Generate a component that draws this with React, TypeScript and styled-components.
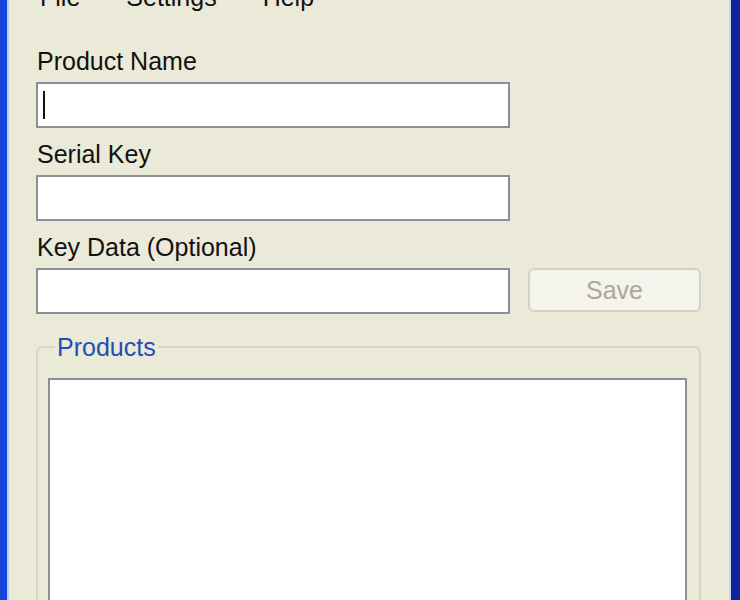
import React from "react";
import styled, { createGlobalStyle } from "styled-components";

const GlobalStyle = createGlobalStyle`
  html, body {
    margin: 0;
    padding: 0;
    overflow: hidden;
  }
  body {
    font-family: "Liberation Sans", Arial, sans-serif;
  }
`;

const Frame = styled.div`
  display: flex;
  height: 100vh;
  box-sizing: border-box;
  border-left: 7px solid #1447d9;
  border-right: 9px solid #0b249e;
  overflow: hidden;
`;

const Client = styled.div`
  flex: 1;
  display: flex;
  flex-direction: column;
  background: #ebe9d8;
  border-left: 2px solid #b9cff2;
  border-right: 2px solid #c7d6ef;
  font-size: 25px;
  color: #111;
`;

const MenuBar = styled.div`
  display: flex;
  height: 30px;
  line-height: 30px;
  margin-top: -18px;
  padding-left: 8px;
`;

const MenuItem = styled.span`
  padding: 0 23px;
`;

const Form = styled.div`
  display: grid;
  grid-template-columns: 474px 173px;
  column-gap: 18px;
  padding: 34px 0 0 27px;
`;

const Label = styled.div`
  grid-column: 1;
  height: 30px;
  line-height: 30px;
  padding-left: 1px;
  margin-bottom: 6px;
`;

const Field = styled.div`
  grid-column: 1;
  height: 46px;
  box-sizing: border-box;
  border: 2px solid #8a9096;
  background: #fff;
  margin-bottom: 11px;
  display: flex;
  align-items: center;
  padding-left: 5px;
`;

const Caret = styled.span`
  width: 2px;
  height: 28px;
  background: #111;
`;

const SaveButton = styled.button`
  grid-column: 2;
  height: 44px;
  box-sizing: border-box;
  border: 2px solid #d3d1c4;
  border-radius: 6px;
  background: #f4f3ec;
  color: #aca899;
  font-family: "Liberation Sans", Arial, sans-serif;
  font-size: 25px;
  padding: 0;
`;

const GroupBox = styled.fieldset`
  width: 665px;
  box-sizing: border-box;
  margin: 7px 0 0 27px;
  border: 2px solid #d6d4c6;
  border-radius: 7px;
  padding: 16px 12px 0 10px;
  min-width: 0;
`;

const GroupTitle = styled.legend`
  color: #1f4fb4;
  height: 30px;
  line-height: 30px;
  margin-left: 7px;
  padding: 0 2px;
`;

const ListBox = styled.div`
  height: 300px;
  box-sizing: border-box;
  border: 2px solid #8a9096;
  background: #fff;
`;

export default function App() {
  return (
    <>
      <GlobalStyle />
      <Frame>
        <Client>
          <MenuBar>
            <MenuItem>File</MenuItem>
            <MenuItem>Settings</MenuItem>
            <MenuItem>Help</MenuItem>
          </MenuBar>
          <Form>
            <Label>Product Name</Label>
            <Field>
              <Caret />
            </Field>
            <Label>Serial Key</Label>
            <Field />
            <Label>Key Data (Optional)</Label>
            <Field />
            <SaveButton disabled>Save</SaveButton>
          </Form>
          <GroupBox>
            <GroupTitle>Products</GroupTitle>
            <ListBox />
          </GroupBox>
        </Client>
      </Frame>
    </>
  );
}
